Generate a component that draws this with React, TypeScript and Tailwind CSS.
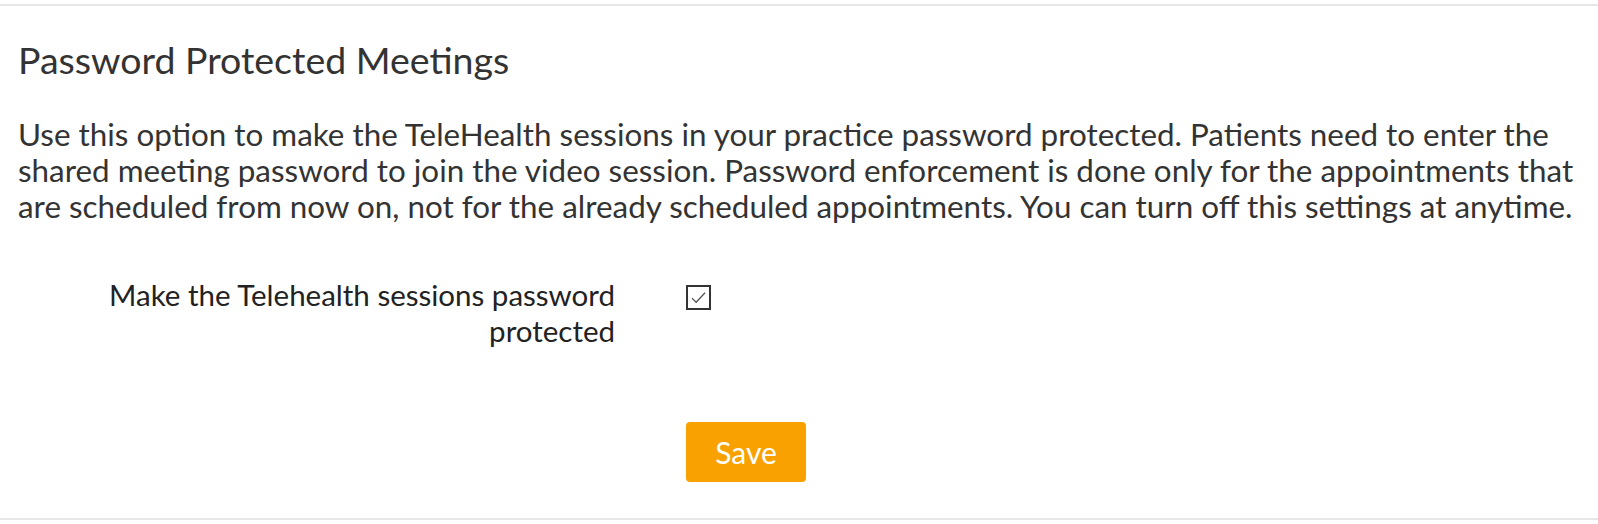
import React from "react";

export default function App() {
  return (
    <div className="min-h-screen bg-white pt-1 font-['Lato','Liberation_Sans',sans-serif] text-[#333]">
      <section className="border-y-2 border-[#e6e6e6] h-[516px] px-[18px]">
        {/* HEADER */}
        <h1 className="pt-[31px] text-[37.5px] leading-[45px] text-[#333]">
          Password Protected Meetings
        </h1>

        <p className="mt-[34px] text-[31.4px] leading-[36px] text-[#333]">
          <span className="block whitespace-nowrap">
            Use this option to make the TeleHealth sessions in your practice password protected. Patients need to enter the
          </span>
          <span className="block whitespace-nowrap">
            shared meeting password to join the video session. Password enforcement is done only for the appointments that
          </span>
          <span className="block whitespace-nowrap">
            are scheduled from now on, not for the already scheduled appointments. You can turn off this settings at anytime.
          </span>
        </p>

        {/* FORM */}
        <div className="mt-[53px] flex items-start">
          <label className="ml-[80px] w-[517px] text-right text-[29.5px] leading-[36px] text-[#222]">
            Make the Telehealth sessions password protected
          </label>
          <div className="ml-[71px] pt-[8px]">
            <span className="flex h-[25px] w-[25px] items-center justify-center border-2 border-[#333] bg-white">
              <svg viewBox="0 0 16 16" className="h-[19px] w-[19px]" fill="none" stroke="#555" strokeWidth="1.1">
                <path d="M2.5 8.5 L6 12 L13.5 4" />
              </svg>
            </span>
          </div>
        </div>

        <div className="mt-[73px] flex">
          <button className="ml-[668px] h-[60px] w-[120px] rounded-[4px] bg-[#f9a100] text-[30px] text-white">
            Save
          </button>
        </div>
      </section>
    </div>
  );
}
